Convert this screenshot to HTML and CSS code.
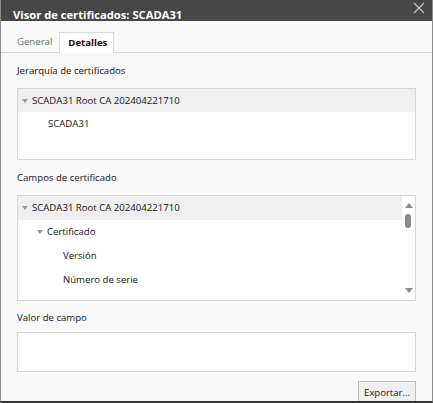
FILE: index.html
```html
<!DOCTYPE html>
<html lang="es">
<head>
<meta charset="utf-8">
<link rel="stylesheet" href="styles.css">
</head>
<body>
<div class="window">
  <div class="titlebar">
    <span class="title">Visor de certificados: SCADA31</span>
    <svg class="close" width="12" height="12" viewBox="0 0 12 12"><path d="M1 1L11 11M11 1L1 11" stroke="#c8c8c8" stroke-width="1.2"/></svg>
  </div>
  <div class="body">
    <div class="tabs">
      <div class="tab">General</div>
      <div class="tab active">Detalles</div>
    </div>
    <div class="content">
      <div class="label">Jerarquía de certificados</div>
      <div class="box box-hier">
        <div class="row sel"><span class="tri"></span>SCADA31 Root CA 202404221710</div>
        <div class="row lvl1">SCADA31</div>
      </div>
      <div class="label">Campos de certificado</div>
      <div class="box box-fields">
        <div class="list">
          <div class="row sel"><span class="tri"></span>SCADA31 Root CA 202404221710</div>
          <div class="row lvl1b"><span class="tri"></span>Certificado</div>
          <div class="row lvl2">Versión</div>
          <div class="row lvl2">Número de serie</div>
          <div class="row lvl2">Algoritmo de firma del certificado</div>
        </div>
        <div class="scroll">
          <span class="arrow up"></span>
          <span class="thumb"></span>
          <span class="arrow down"></span>
        </div>
      </div>
      <div class="label label-value">Valor de campo</div>
      <div class="box box-value"></div>
      <div class="actions"><button class="btn">Exportar...</button></div>
    </div>
  </div>
</div>
</body>
</html>
```
FILE: styles.css
```css
html, body {
  margin: 0;
  padding: 0;
  width: 433px;
  height: 403px;
  overflow: hidden;
  background: #f9f9f9;
  font-family: "Open Sans", "Noto Sans", sans-serif;
  font-size: 9.6px;
  color: #141414;
}
.window {
  width: 433px;
  height: 403px;
  box-sizing: border-box;
  border-left: 1px solid #8a8a8a;
  border-right: 1px solid #8a8a8a;
  border-bottom: 2px solid #333;
  display: flex;
  flex-direction: column;
  overflow: hidden;
}
.titlebar {
  height: 21px;
  background: #474747;
  position: relative;
  display: flex;
  align-items: flex-end;
  padding-left: 12px;
  flex: none;
}
.title {
  color: #fff;
  font-weight: bold;
  font-size: 11.2px;
  line-height: 12px;
}
.close {
  position: absolute;
  right: 7px;
  top: 2px;
}
.body {
  flex: none;
  background: #f9f9f9;
  display: flex;
  flex-direction: column;
}
.tabs {
  display: flex;
  padding: 11px 0 0 9px;
  border-bottom: 1px solid #d9d9d9;
  height: 20px;
  flex: none;
}
.tab {
  height: 20px;
  line-height: 20px;
  padding: 0 7px 0 7px;
  color: #6d6d6d;
  box-sizing: border-box;
}
.tab.active {
  background: #fff;
  color: #111;
  font-weight: bold;
  border: 1px solid #d9d9d9;
  border-bottom: none;
  height: 21px;
  margin-bottom: -1px;
  padding: 0 6px 0 8px;
}
.content {
  padding: 10px 16px 0 16px;
  display: flex;
  flex-direction: column;
  flex: none;
}
.content > * { flex: none; }
.label {
  height: 16px;
  line-height: 16px;
  margin-bottom: 9px;
}
.label-value {
  margin-top: 3px;
  margin-bottom: 6px;
}
.box {
  background: #fff;
  border: 1px solid #d6d6d6;
}
.box-hier {
  height: 70px;
  margin-bottom: 10px;
}
.row {
  height: 23px;
  line-height: 23px;
  white-space: nowrap;
  padding-left: 13px;
  position: relative;
}
.row.sel {
  background: #efefef;
}
.tri {
  display: inline-block;
  width: 0;
  height: 0;
  border-left: 3.5px solid transparent;
  border-right: 3.5px solid transparent;
  border-top: 4px solid #9a9a9a;
  margin-right: 4px;
  margin-left: -9px;
  vertical-align: 1px;
}
.row.sel { padding-left: 10px; }
.lvl1 { padding-left: 30px; }
.lvl1b { padding-left: 26px; }
.lvl2 { padding-left: 45px; }
.row.sel .tri { margin-left: -6px; }
.row.lvl1b .tri { margin-left: -7px; }
.box-fields {
  height: 104px;
  margin-bottom: 6px;
  display: flex;
  overflow: hidden;
}
.list {
  flex: 1;
  overflow: hidden;
}
.list .row { height: 24px; line-height: 24px; }
.scroll {
  width: 13px;
  position: relative;
  background: #fff;
}
.arrow {
  position: absolute;
  left: 3px;
  width: 0;
  height: 0;
  border-left: 4px solid transparent;
  border-right: 4px solid transparent;
}
.arrow.up { top: 7px; border-bottom: 5px solid #8a8a8a; }
.arrow.down { bottom: 7px; border-top: 5px solid #8a8a8a; }
.thumb {
  position: absolute;
  left: 3px;
  top: 18px;
  width: 6px;
  height: 14px;
  border-radius: 3px;
  background: #8a8a8a;
}
.box-value {
  height: 38px;
}
.actions {
  display: flex;
  justify-content: flex-end;
  margin-top: 9px;
}
.btn {
  font-family: inherit;
  font-size: 9.6px;
  color: #222;
  width: 58px;
  height: 22px;
  padding: 0;
  border: 1px solid #bdbdbd;
  background: #efefef;
  border-radius: 0;
}
```
